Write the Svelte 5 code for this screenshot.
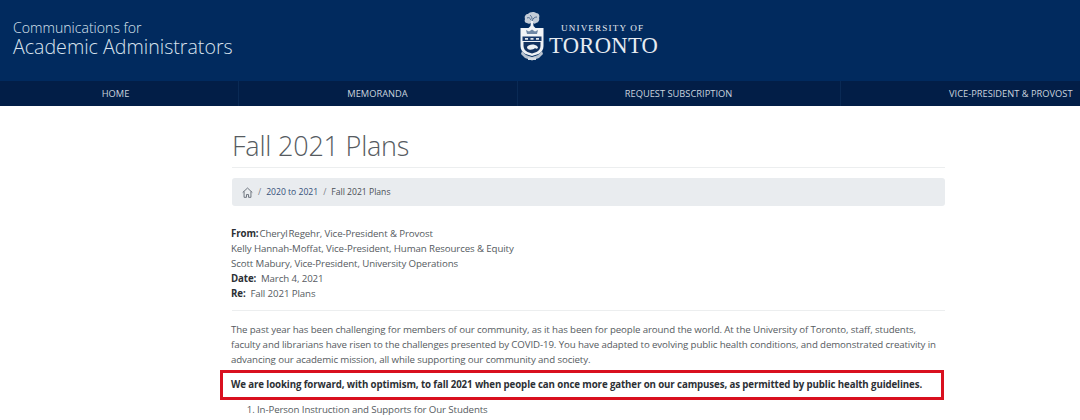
<script>
  const navItems = [
    { label: 'HOME', cls: 'w1' },
    { label: 'MEMORANDA', cls: 'w2' },
    { label: 'REQUEST SUBSCRIPTION', cls: 'w3' },
    { label: 'VICE-PRESIDENT & PROVOST', cls: 'w4' }
  ];
</script>

<div class="page">
  <header class="top">
    <div class="brand">
      <div class="brand-a">Communications for</div>
      <div class="brand-b">Academic Administrators</div>
    </div>
    <div class="logo">
      <svg class="crest" width="24" height="50" viewBox="0 0 24 50" aria-hidden="true">
        <!-- tree -->
        <path d="M5 8c-1-3 1-5 3-5 1-2 6-3 8-1 3 0 4 3 3 5 1 2-1 5-3 5-1 1-2 1-3 0h-2c-1 1-3 1-4 0-2 0-3-2-2-4z" fill="#c3ccd8"/>
        <path d="M7 7c2-1 3 0 4 2M17 6c-2 0-4 1-5 4M10 4c1 1 2 2 2 4" fill="none" stroke="#3f5d85" stroke-width="0.9"/>
        <path d="M11 10h2l.5 5 2 2H8.500l2-2z" fill="#eef1f5"/>
        <!-- crest top band -->
        <rect x="0.500" y="17" width="23" height="8" fill="#f2f4f7"/>
        <path d="M7 23l-1-4 3 1.500 3-2 3 2 3-1.500-1 4z" fill="#6f87a5"/>
        <!-- shield -->
        <path d="M0.500 25h23v10c0 4-2 6-5 8l-6.500 2-6.500-2c-3-2-5-4-5-8z" fill="#eef1f5"/>
        <path d="M2.500 25.500h19V30h-19z" fill="#17386a"/>
        <path d="M5 27h3v1.800H5zM10.500 27h3v1.800h-3zM16 27h3v1.800h-3z" fill="#dfe5ec"/>
        <path d="M3.500 31h17v4c0 3-2 5-4 6l-4.500 1.500-4.500-1.500c-2-1-4-3-4-6z" fill="#12315f"/>
        <path d="M7 36c1-2 5-3 8-2 2 .5 3 2 3 3-1 1-2 1-3 0-1 1.500-4 2-6 1.500-1 0-2-1-2-2.500z" fill="#eef1f5"/>
        <!-- motto scroll -->
        <path d="M2 40l4 4 6 2 6-2 4-4 1 3-4 4-7 2.500L5 47l-4-4z" fill="#b6c1cf"/>
        <path d="M8 46.500h8v2.500H8z" fill="#d5dbe3"/>
      </svg>
      <div class="wordmark">
        <div class="uni">UNIVERSITY OF</div>
        <div class="tor">TORONTO</div>
      </div>
    </div>
  </header>

  <nav class="nav">
    {#each navItems as item}
      <a class="nav-item {item.cls}" href="#top">{item.label}</a>
    {/each}
  </nav>

  <main class="content">
    <h1>Fall 2021 Plans</h1>
    <div class="crumbs">
      <svg width="11" height="11" viewBox="0 0 16 16" fill="none" stroke="#555e68" stroke-width="1.2" aria-hidden="true">
        <path d="M1 8l7-6.500L15 8M3 6.500V15h3.500v-4h3v4H13V6.500"/>
      </svg>
      <span class="sep">/</span>
      <a href="#top">2020 to 2021</a>
      <span class="sep">/</span>
      <span>Fall 2021 Plans</span>
    </div>

    <div class="meta">
      <div><b>From:</b><span class="tight">Cheryl Regehr,</span> Vice-President &amp; Provost</div>
      <div>Kelly Hannah-Moffat, Vice-President, Human Resources &amp; Equity</div>
      <div>Scott Mabury, Vice-President, University Operations</div>
      <div><b>Date:</b>&nbsp; March 4, 2021</div>
      <div><b>Re:</b>&nbsp; Fall 2021 Plans</div>
    </div>

    <p class="intro">The past year has been challenging for members of our community, as it has been for people around the world. At the University of Toronto, staff, students, faculty and librarians have risen to the challenges presented by COVID-19. You have adapted to evolving public health conditions, and demonstrated creativity in advancing our academic mission, all while supporting our community and society.</p>

    <p class="lead"><b>We are looking forward, with optimism, to fall 2021 when people can once more gather on our campuses, as permitted by public health guidelines.</b></p>

    <ol>
      <li>In-Person Instruction and Supports for Our Students</li>
    </ol>
  </main>
</div>

<style>
  :global(body) {
    margin: 0;
    background: #fff;
  }
  .page {
    width: 1080px;
    height: 420px;
    overflow: hidden;
    font-family: "Open Sans", "Noto Sans", sans-serif;
    color: #565b61;
    font-size: 9.7px;
    letter-spacing: -0.11px;
  }
  .top {
    height: 81px;
    background: #012a5e;
    display: flex;
    align-items: center;
    letter-spacing: 0;
  }
  .brand {
    margin-left: 13px;
    margin-top: -5px;
    font-weight: 300;
    color: #d9e3ee;
    width: 219px;
    flex: none;
  }
  .brand-a {
    font-size: 14.1px;
    line-height: 16px;
  }
  .brand-b {
    font-size: 19.6px;
    line-height: 21px;
    white-space: nowrap;
  }
  .logo {
    margin-left: 288px;
    margin-top: -10px;
    display: flex;
    align-items: center;
    gap: 5px;
  }
  .wordmark {
    font-family: "Liberation Serif", serif;
    color: #e6ebf1;
    margin-top: 9px;
  }
  .uni {
    font-size: 9.2px;
    letter-spacing: 1.1px;
    line-height: 11px;
    margin-left: 12px;
  }
  .tor {
    font-size: 22.6px;
    line-height: 24px;
    letter-spacing: 0.3px;
  }
  .nav {
    height: 25px;
    background: #021e47;
    display: flex;
    white-space: nowrap;
    letter-spacing: 0;
  }
  .nav-item {
    box-sizing: border-box;
    display: block;
    color: #c9d3de;
    font-size: 9.3px;
    line-height: 25px;
    text-decoration: none;
    text-align: center;
    border-right: 1px solid #0a2a55;
    flex: none;
  }
  .w1 { width: 239px; padding-right: 7px; }
  .w2 { width: 279px; padding-right: 1px; }
  .w3 { width: 323px; padding-right: 1px; }
  .w4 { width: 239px; border-right: 0; text-align: left; padding-left: 108px; }
  .content {
    width: 713px;
    margin-left: 232px;
  }
  h1 {
    margin: 0;
    padding: 21px 0 3px;
    height: 37px;
    font-size: 27px;
    line-height: 37px;
    font-weight: 300;
    letter-spacing: -0.22px;
    color: #565b61;
    border-bottom: 1px solid #eceeef;
  }
  .crumbs {
    box-sizing: border-box;
    height: 28px;
    margin-top: 10px;
    background: #e9ecef;
    border-radius: 3px;
    display: flex;
    align-items: center;
    gap: 5px;
    padding-left: 10px;
    font-size: 8.6px;
    letter-spacing: 0;
    color: #4a4f55;
  }
  .crumbs a {
    color: #35507a;
    text-decoration: none;
  }
  .sep {
    color: #7a8087;
  }
  .meta {
    margin-top: 20px;
    padding-bottom: 9px;
    line-height: 15px;
    border-bottom: 1px solid #eceeef;
  }
  .meta div {
    margin-left: -1px;
  }
  .tight {
    margin-left: 1px;
    word-spacing: -1.5px;
  }
  .meta b, .lead b {
    font-weight: 700;
    color: #2c3035;
  }
  .intro {
    margin: 11px 0 0 -1px;
    line-height: 15.2px;
  }
  .lead {
    margin: 0 0 0 -1px;
    padding-top: 9.500px;
    line-height: 15px;
    white-space: nowrap;
    position: relative;
  }
  .lead::before {
    content: "";
    position: absolute;
    left: -11px;
    width: 718px;
    top: 2px;
    height: 24px;
    border: 3px solid #d9101f;
  }
  ol {
    margin: 10px 0 0;
    padding-left: 25px;
    line-height: 15px;
  }
</style>
